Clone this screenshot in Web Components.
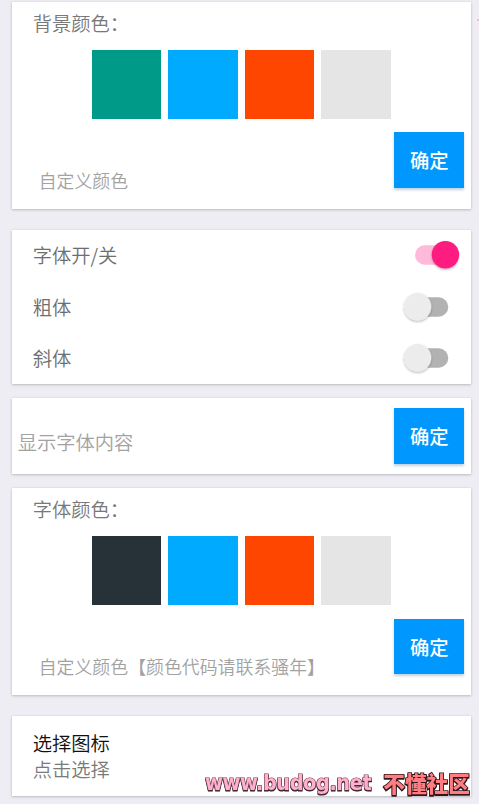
<!DOCTYPE html>
<html lang="zh-CN">
<head>
<meta charset="utf-8">
<title>设置</title>
<style>
html,body{margin:0;height:804px;overflow:hidden;background:#eeedf3}
body{font-family:"Noto Sans CJK SC",sans-serif}
</style>
</head>
<body>
<settings-page></settings-page>
<script>
function define(name, html) {
  const t = document.createElement('template');
  t.innerHTML = html;
  customElements.define(name, class extends HTMLElement {
    constructor() {
      super();
      this.attachShadow({mode: 'open'}).append(t.content.cloneNode(true));
    }
  });
}

define('settings-card', `<style>
:host{display:flex;box-sizing:border-box;width:459.3px;background:#fff;box-shadow:0 1.3px 2.5px rgba(0,0,0,.2),0 0 2px rgba(0,0,0,.07)}
</style><slot></slot>`);

define('confirm-button', `<style>
:host{display:block;flex:none;width:69.5px;height:55.7px;margin-right:7px;background:#0098ff;box-shadow:0 1.5px 2.5px rgba(0,70,120,.25)}
button{all:unset;display:block;width:100%;text-align:center;font:500 19.3px/56px "Noto Sans CJK SC",sans-serif;color:#fff}
</style><button><slot></slot></button>`);

define('color-swatch', `<style>
:host{display:block;width:69.5px;height:69.7px;background:var(--swatch)}
</style>`);

define('hint-text', `<style>
:host{display:block;font-size:var(--hint-size,17.9px);line-height:26px;font-weight:350;color:#a2a2a2;white-space:nowrap}
</style><slot></slot>`);

define('color-panel', `<style>
:host{display:flex;flex-direction:column;width:100%;box-sizing:border-box;padding-top:7px}
.title{font-size:19.3px;line-height:28px;font-weight:350;color:#787878;padding-left:21px}
.swatches{display:flex;gap:7px;padding:12.5px 0 0 80px}
.foot{display:flex;justify-content:space-between;padding:13.3px 0 0 27px}
.foot ::slotted(hint-text){margin-top:34.6px}
</style>
<div class="title"><slot name="title"></slot></div>
<div class="swatches"><slot></slot></div>
<div class="foot"><slot name="hint"></slot><confirm-button>确定</confirm-button></div>`);

define('toggle-switch', `<style>
:host{display:block;width:60px;height:36px}
svg{display:block}
.on,:host([checked]) .off{display:none}
:host([checked]) .on{display:block}
</style>
<svg width="60" height="36" viewBox="0 0 60 36">
<defs><filter id="s" x="-30%" y="-30%" width="160%" height="170%"><feDropShadow dx="0" dy="1.2" stdDeviation="1" flood-opacity=".3"/></filter></defs>
<g class="off"><rect x="5" y="8.3" width="43.3" height="19.4" rx="9.7" fill="#b2b2b2"/><circle cx="17.6" cy="17.7" r="13.7" fill="#ececec" filter="url(#s)"/></g>
<g class="on"><rect x="15" y="8.3" width="43.3" height="19.4" rx="9.7" fill="#ffbadb"/><circle cx="45.4" cy="17.7" r="13.7" fill="#ff1a80" filter="url(#s)"/></g>
</svg>`);

define('toggle-row', `<style>
:host{display:flex;align-items:center;justify-content:space-between;height:51.5px;padding:0 11px 0 21px;font-size:19.3px;font-weight:350;color:#6e6e6e}
</style><span><slot></slot></span><slot name="control"></slot>`);

define('site-mark', `<style>
:host{display:flex;align-items:center;justify-content:space-between;position:absolute;left:205px;top:768px;width:265px;height:30px;white-space:nowrap;filter:drop-shadow(.7px 1px 0 #2b1820)}
span{display:block;line-height:30px;paint-order:stroke;stroke-linejoin:round}
.url{font-family:"DejaVu Sans Condensed","DejaVu Sans",sans-serif;font-stretch:condensed;font-weight:bold;font-size:21.5px;letter-spacing:-.42px;color:#ffb0cc;-webkit-text-stroke:1.2px #6e3c50}
.name{font-family:"Noto Sans CJK SC",sans-serif;font-weight:900;font-size:21.7px;color:#ff7c80;-webkit-text-stroke:1.6px #321418}
</style>
<span class="url">www.budog.net</span><span class="name">不懂社区</span>`);

define('settings-page', `<style>
:host{display:flex;flex-direction:column;box-sizing:border-box;width:479px;height:804px;padding:2px 0 0 11.7px;overflow:hidden;position:relative}
.bg{height:206.5px;margin-bottom:21px}
.toggles{height:154.5px;flex-direction:column;margin-bottom:14px}
.content{height:76.3px;margin-bottom:13.9px;justify-content:space-between;align-items:center}
.content hint-text{--hint-size:19.3px;padding:12px 0 0 6px}
.font{height:206.7px;margin-bottom:20.9px}
.icon{height:80.5px;flex-direction:column;padding:14px 0 0 21px;font-size:19.3px;line-height:26.3px;font-weight:350;color:#7a7a7a}
.icon b{font-weight:350;color:#111}
.edge{position:absolute;left:477px;top:19px;width:2px;height:2px;background:#fbb9d5}
</style>
<settings-card class="bg"><color-panel><span slot="title">背景颜色：</span>
<color-swatch style="--swatch:#009b88"></color-swatch><color-swatch style="--swatch:#00aaff"></color-swatch><color-swatch style="--swatch:#ff4600"></color-swatch><color-swatch style="--swatch:#e5e5e5"></color-swatch>
<hint-text slot="hint">自定义颜色</hint-text></color-panel></settings-card>
<settings-card class="toggles">
<toggle-row>字体开/关<toggle-switch slot="control" checked></toggle-switch></toggle-row>
<toggle-row>粗体<toggle-switch slot="control"></toggle-switch></toggle-row>
<toggle-row>斜体<toggle-switch slot="control"></toggle-switch></toggle-row>
</settings-card>
<settings-card class="content"><hint-text>显示字体内容</hint-text><confirm-button>确定</confirm-button></settings-card>
<settings-card class="font"><color-panel><span slot="title">字体颜色：</span>
<color-swatch style="--swatch:#263238"></color-swatch><color-swatch style="--swatch:#00aaff"></color-swatch><color-swatch style="--swatch:#ff4600"></color-swatch><color-swatch style="--swatch:#e5e5e5"></color-swatch>
<hint-text slot="hint">自定义颜色【颜色代码请联系骚年】</hint-text></color-panel></settings-card>
<settings-card class="icon"><b>选择图标</b><span>点击选择</span></settings-card>
<div class="edge"></div>
<site-mark></site-mark>`);
</script>
</body>
</html>
